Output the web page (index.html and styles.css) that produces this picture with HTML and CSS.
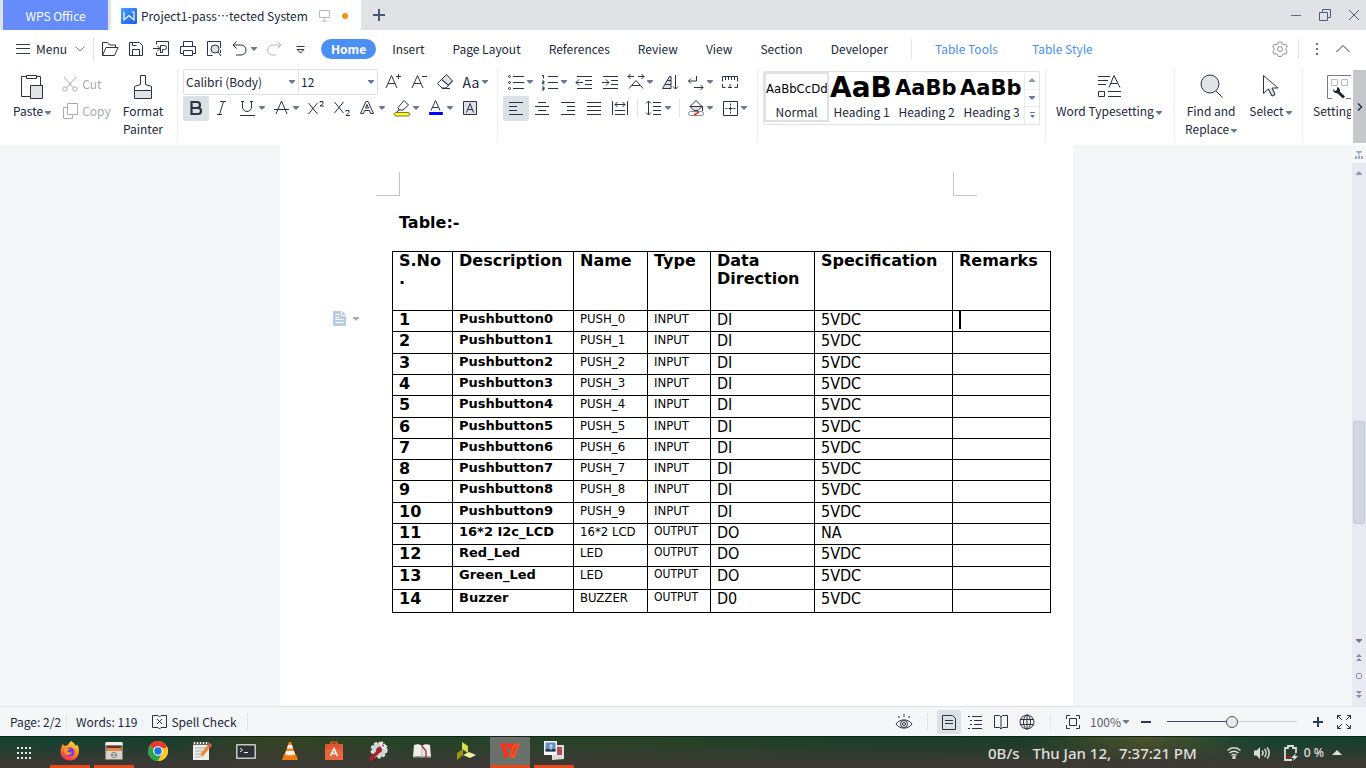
FILE: index.html
```html
<!DOCTYPE html>
<html lang="en">
<head>
<meta charset="utf-8">
<title>Project1 - WPS Office</title>
<link rel="stylesheet" href="styles.css">
</head>
<body>
<svg class="sprite" aria-hidden="true">
  <symbol id="caret" viewBox="0 0 6 4"><path d="M0 0h6v1L3 4 0 1z" fill="#6b7a99"/></symbol>
  <symbol id="caret-up" viewBox="0 0 6 4"><path d="M0 4h6V3L3 0 0 3z" fill="#8f9bb8"/></symbol>
</svg>
<div class="app">

<header class="titlebar">
  <button class="wps-tab">WPS Office</button>
  <div class="doc-tab">
    <svg width="16" height="16" viewBox="0 0 16 16"><defs><linearGradient id="wl" x2="1" y2="1"><stop stop-color="#4a9bff"/><stop offset="1" stop-color="#1660ea"/></linearGradient></defs><rect width="16" height="16" rx="1" fill="url(#wl)"/><path d="M3 4v8l5-4.500 5 4.500V4h-2.500" fill="none" stroke="#fff" stroke-width="1.200"/></svg>
    <span class="doc-name" lang="zh-CN">Project1-pass…tected System</span>
    <svg width="11" height="12" viewBox="0 0 11 12" fill="none" stroke="#b4bacb"><path d="M.5 .5h10v7H.5zM5.500 8v3M2.500 11h6"/></svg>
    <span class="unsaved"></span>
  </div>
  <button class="new-tab" aria-label="New tab"><svg width="12" height="12" viewBox="0 0 12 12"><path d="M6 0v12M0 6h12" stroke="#4c5774" stroke-width="2"/></svg></button>
  <div class="window-buttons">
    <button aria-label="Minimize"><svg width="12" height="12" viewBox="0 0 12 12" stroke="#5a6a8c"><path d="M1 6.500h10"/></svg></button>
    <button aria-label="Restore"><svg width="12" height="12" viewBox="0 0 12 12" fill="none" stroke="#4d5d80"><path d="M.5 3.500h8v8h-8zM3.500 3V.5h8v8H9"/></svg></button>
    <button aria-label="Close"><svg width="12" height="12" viewBox="0 0 12 12" stroke="#4d5d80"><path d="M1 1l10 10M11 1L1 11"/></svg></button>
  </div>
</header>

<nav class="menubar">
  <button class="menu-button">
    <svg width="14" height="12" viewBox="0 0 14 12" stroke="#333a4c"><path d="M0 1.500h14M0 5.500h14M0 10.500h14"/></svg>
    <span>Menu</span>
    <svg width="10" height="6" viewBox="0 0 10 6" fill="none" stroke="#8a8f9b"><path d="M.5 .5L5 5 9.500 .5"/></svg>
  </button>
  <span class="rule"></span>
  <div class="quick">
    <button aria-label="Open"><svg class="ic" viewBox="0 0 20 20"><path d="M2.500 16.500v-13h5l2 2.500h6v2M2.500 16.500l3.500-8h12l-3.500 8z"/></svg></button>
    <button aria-label="Save"><svg class="ic" viewBox="0 0 20 20"><path d="M3.500 3.500h10l3 3v10h-13zM6.500 16.500v-6h7v6M6.500 3.500v3h4"/></svg></button>
    <button aria-label="Export to PDF"><svg class="ic" viewBox="0 0 20 20"><path d="M4.500 5.500v-3h12v14h-12v-3M1 9.500h7M5.500 7L8 9.500 5.500 12M8.500 14V6.500h4a2 2 0 0 1 0 4h-2v3h-2"/></svg></button>
    <button aria-label="Print"><svg class="ic" viewBox="0 0 20 20"><path d="M5.500 7.500v-5h9v5M5.500 14.500h-3v-7h15v7h-3M5.500 11.500h9v5h-9z"/></svg></button>
    <button aria-label="Print preview"><svg class="ic" viewBox="0 0 20 20"><path d="M16.500 9V2.500h-13v14h5M16.500 14v-3"/><circle cx="11" cy="10" r="4" fill="#dfe1e6"/><path d="M14 13l3 4"/></svg></button>
    <button class="has-caret" aria-label="Undo"><svg class="ic" viewBox="0 0 20 20"><path d="M6.500 2.500L3 6l3.500 3.500M3 6h8a5 5 0 0 1 0 10H6"/></svg><svg class="caret"><use href="#caret"/></svg></button>
    <button aria-label="Redo"><svg class="ic off" viewBox="0 0 20 20"><path d="M13.500 2.500L17 6l-3.500 3.500M17 6H9a5 5 0 0 0-4 8.500 5 5 0 0 0 4 1.500h3"/></svg></button>
    <button aria-label="More quick access"><svg class="ic" viewBox="0 0 20 20"><path d="M6.500 7.500h8M7 10.500l3.500 3.500L14 10.500z"/></svg></button>
  </div>
  <div class="tabs">
    <button class="tab active">Home</button>
    <button class="tab">Insert</button>
    <button class="tab">Page Layout</button>
    <button class="tab">References</button>
    <button class="tab">Review</button>
    <button class="tab">View</button>
    <button class="tab">Section</button>
    <button class="tab">Developer</button>
    <span class="rule short"></span>
    <button class="tab context">Table Tools</button>
    <button class="tab context">Table Style</button>
  </div>
  <div class="menubar-end">
    <button aria-label="Settings"><svg class="ic grey" viewBox="0 0 20 20"><path d="M8.300 3h3.400l.6 2 1.500.8 2-.5 1.500 2.800-1.500 1.400v1.600l1.500 1.400-1.500 2.700-2-.5-1.500.8-.6 2H8.300l-.6-2-1.500-.8-2 .5-1.500-2.700 1.500-1.400V9.500L2.700 8.100l1.500-2.800 2 .5L7.700 5z"/><circle cx="10" cy="10" r="2.500"/></svg></button>
    <span class="rule short"></span>
    <button aria-label="More"><svg class="ic" viewBox="0 0 20 20"><path d="M9 4h2v2H9zM9 9h2v2H9zM9 14h2v2H9z" fill="#666c7c" stroke="none"/></svg></button>
    <button aria-label="Collapse ribbon"><svg class="ic" viewBox="0 0 20 20"><path d="M3.500 13L10 6.500l6.500 6.500"/></svg></button>
  </div>
</nav>

<section class="ribbon" aria-label="Home tools">
  <div class="group clipboard">
    <button class="big"><svg width="28" height="28" viewBox="0 0 28 28" fill="none" stroke="#2b3245"><path d="M9 4.500H3.500v20H12M18 4.500h4.500V13M8.500 3.500h10v3h-10z"/><path d="M12.500 13.500h12v13h-12z" fill="#e1e3e7"/></svg><span>Paste<svg class="caret"><use href="#caret"/></svg></span></button>
    <div class="stack">
      <button class="line off"><svg width="16" height="16" viewBox="0 0 16 16" fill="none" stroke="#a9abb0"><path d="M2 1l9 10.500M14 1L5 11.500"/><circle cx="3" cy="13" r="2.200"/><circle cx="13" cy="13" r="2.200"/></svg>Cut</button>
      <button class="line off"><svg width="16" height="16" viewBox="0 0 16 16" fill="none" stroke="#a9abb0"><path d="M5.500 .5h10v11h-10zM5 4.500H1.500v11h9V12"/></svg>Copy</button>
    </div>
    <button class="big"><svg width="28" height="28" viewBox="0 0 28 28" fill="none" stroke="#2b3245"><path d="M5.500 18.500h17v8h-17z" fill="#e1e3e7"/><path d="M5.500 18.500v-4l6-2v-9h5v9l6 2v4"/></svg><span>Format<br>Painter</span></button>
  </div>

  <div class="group font">
    <div class="row">
      <div class="combos">
        <label class="combo wide"><select aria-label="Font"><option>Calibri (Body)</option></select><svg class="caret"><use href="#caret"/></svg></label>
        <label class="combo"><select aria-label="Font size"><option>12</option></select><svg class="caret"><use href="#caret"/></svg></label>
      </div>
      <button aria-label="Grow font"><svg class="ic" viewBox="0 0 20 20"><path d="M3 16L8.500 3.500 14 16M5 11.500h7M13 4.500h5M15.500 2v5"/></svg></button>
      <button aria-label="Shrink font"><svg class="ic" viewBox="0 0 20 20"><path d="M3 16L8.500 3.500 14 16M5 11.500h7M13 4.500h5"/></svg></button>
      <button aria-label="Clear formatting"><svg class="ic" viewBox="0 0 20 20"><path d="M6.500 7.500l5-5 6 6.500-4 4z" fill="#dfe1e6"/><path d="M6.500 7.500l-4 4 4.500 4.500h4l6.500-7M6.500 7.500L13 13M7 16.500h8"/></svg></button>
      <button class="has-caret" aria-label="Change case"><span class="case">Aa</span><svg class="caret"><use href="#caret"/></svg></button>
    </div>
    <div class="row">
      <button class="on" aria-label="Bold"><svg class="ic" viewBox="0 0 20 20"><path d="M5.500 4h5.500a3 3 0 0 1 0 6H5.500zM5.500 10h6.500a3 3 0 0 1 0 6H5.500z" stroke-width="2.200"/></svg></button>
      <button aria-label="Italic"><svg class="ic" viewBox="0 0 20 20"><path d="M8 3.500h6M5 16.500h5M11.500 3.500l-4 13"/></svg></button>
      <button class="has-caret" aria-label="Underline"><svg class="ic" viewBox="0 0 20 20"><path d="M4.500 3v6a4.500 4.500 0 0 0 9 0V3M2 17.500h15M3 3.500h3M12 3.500h3"/></svg><svg class="caret"><use href="#caret"/></svg></button>
      <button class="has-caret" aria-label="Strikethrough"><svg class="ic" viewBox="0 0 20 20"><path d="M4 16L9.500 3 15 16M2 11.500h15"/></svg><svg class="caret"><use href="#caret"/></svg></button>
      <button aria-label="Superscript"><svg class="ic" viewBox="0 0 20 20"><path d="M2.500 5l9 11M11.500 5l-9 11M14 4.500V3.500h3v2l-3 2.500h4"/></svg></button>
      <button aria-label="Subscript"><svg class="ic" viewBox="0 0 20 20"><path d="M2.500 4l9 11M11.500 4l-9 11M14 13.500v-1h3v2L14 17.500h4"/></svg></button>
      <button class="has-caret" aria-label="Text effects"><svg class="ic" viewBox="0 0 20 20"><path d="M2.500 15.500L8 3.500h2l5.500 12h-3l-1-3h-5l-1 3zM7.500 10h3L9 6.500z"/></svg><svg class="caret"><use href="#caret"/></svg></button>
      <button class="has-caret" aria-label="Highlight"><svg class="ic" viewBox="0 0 20 20"><path d="M6 9.500l6-7 4.500 4.500-5.500 5H7zM7 12l-3 2.500h5"/><rect x="2.500" y="14.500" width="15" height="3.500" rx="1.500" fill="#ff0" stroke="#77765a"/></svg><svg class="caret"><use href="#caret"/></svg></button>
      <button class="has-caret" aria-label="Font color"><svg class="ic" viewBox="0 0 20 20"><path d="M5 12.500L9.500 2.500 14 12.500M6.500 9.500h6"/><rect x="3" y="14" width="14" height="3" rx="1" fill="#00f" stroke="none"/></svg><svg class="caret"><use href="#caret"/></svg></button>
      <button aria-label="Character shading"><svg class="ic" viewBox="0 0 20 20"><path d="M3.500 3.500h13v13h-13z" fill="#dfe1e6"/><path d="M6.500 14.500L10 5.500l3.500 9M7.500 11.500h5"/></svg></button>
    </div>
  </div>

  <div class="group para">
    <div class="row">
      <button class="has-caret" aria-label="Bullets"><svg class="ic" viewBox="0 0 20 20"><path d="M7 4.500h11M7 10.500h11M7 16.500h11"/><circle cx="3.500" cy="4.500" r="1"/><circle cx="3.500" cy="10.500" r="1"/><circle cx="3.500" cy="16.500" r="1"/></svg><svg class="caret"><use href="#caret"/></svg></button>
      <button class="has-caret" aria-label="Numbering"><svg class="ic" viewBox="0 0 20 20"><path d="M8 4.500h10M8 10.500h10M8 16.500h10M2 3.500h1.500v3M2 9h2v1.500H2.500V12H4.500M2 15h2v3H2M2.500 16.500H4"/></svg><svg class="caret"><use href="#caret"/></svg></button>
      <button aria-label="Decrease indent"><svg class="ic" viewBox="0 0 20 20"><path d="M3 4.500h15M11 8.500h7M11 12.500h7M3 16.500h15M2 10.500h7M5 7.500l-3 3 3 3"/></svg></button>
      <button aria-label="Increase indent"><svg class="ic" viewBox="0 0 20 20"><path d="M3 4.500h15M11 8.500h7M11 12.500h7M3 16.500h15M2 10.500h7M6 7.500l3 3-3 3"/></svg></button>
      <button class="has-caret" aria-label="Character scaling"><svg class="ic" viewBox="0 0 20 20"><path d="M2 4.500h6M4.500 2L2 4.500 4.500 7M12 4.500h6M15.500 2L18 4.500 15.500 7M3 16.500l7-8 7 8M6 13.500h8"/></svg><svg class="caret"><use href="#caret"/></svg></button>
      <button aria-label="Sort"><svg class="ic" viewBox="0 0 20 20"><path d="M2.500 16.500l7-12h1.500v12z" fill="#dfe1e6"/><path d="M5 12.500h6M7 8.500h4M15.500 3v14M13 14.500l2.500 2.500 2.500-2.500"/></svg></button>
      <button class="has-caret" aria-label="Paragraph marks"><svg class="ic" viewBox="0 0 20 20"><path d="M10.500 4v5h-8M5 6.500L2.500 9 5 11.500M8 15.500h9M14.500 13l2.500 2.500L14.500 18"/></svg><svg class="caret"><use href="#caret"/></svg></button>
      <button aria-label="Tabs"><svg class="ic" viewBox="0 0 20 20"><path d="M2.500 9.500v-5h15v5M5.500 5v3M8.500 5v3M11.500 5v3M14.500 5v3M2.500 12v3.500h3M8 15.500h4M10 12v3.500M14.500 15.500h3V12"/></svg></button>
    </div>
    <div class="row">
      <button class="on" aria-label="Align left"><svg class="ic" viewBox="0 0 20 20"><path d="M3 4.500h14M3 8.500h8M3 12.500h8M3 16.500h14"/></svg></button>
      <button aria-label="Center"><svg class="ic" viewBox="0 0 20 20"><path d="M6 4.500h8M3 8.500h14M6 12.500h8M3 16.500h14"/></svg></button>
      <button aria-label="Align right"><svg class="ic" viewBox="0 0 20 20"><path d="M3 4.500h14M9 8.500h8M9 12.500h8M3 16.500h14"/></svg></button>
      <button aria-label="Justify"><svg class="ic" viewBox="0 0 20 20"><path d="M3 4.500h14M3 8.500h14M3 12.500h14M3 16.500h14"/></svg></button>
      <button aria-label="Distribute"><svg class="ic" viewBox="0 0 20 20"><path d="M2.500 3v14M17.500 3v14M5 12.500h10M5 16.500h10M5 6.500h10M7.500 4L5 6.500 7.500 9M12.500 4L15 6.500 12.500 9"/></svg></button>
      <span class="rule mini"></span>
      <button class="has-caret" aria-label="Line spacing"><svg class="ic" viewBox="0 0 20 20"><path d="M4.500 3v14M2 5.500L4.500 3 7 5.500M2 14.500L4.500 17 7 14.500M9 4.500h8M9 8.500h8M9 12.500h8M9 16.500h8"/></svg><svg class="caret"><use href="#caret"/></svg></button>
      <span class="rule mini"></span>
      <button class="has-caret" aria-label="Shading"><svg class="ic" viewBox="0 0 20 20"><path d="M4 8.500h12l-5 4.500H8z" fill="#dfe1e6" stroke="none"/><path d="M4 8.500L10 2.500l6 6-4 4H8zM4 8.500h12M16.500 8v5"/><rect x="2.500" y="13.500" width="15" height="4" rx="2" fill="#fff" stroke="#888"/><path d="M8 17l5-3" stroke="#f03030" stroke-width="1.500"/></svg><svg class="caret"><use href="#caret"/></svg></button>
      <button class="has-caret" aria-label="Borders"><svg class="ic" viewBox="0 0 20 20"><path d="M3.500 3.500h14v14h-14z"/><path d="M10.500 5.500v10M5.500 10.500h10" stroke-dasharray="2 1 4 1 2"/></svg><svg class="caret"><use href="#caret"/></svg></button>
    </div>
  </div>

  <div class="group styles">
    <div class="gallery">
      <button class="style chosen"><span class="sample normal">AaBbCcDd</span><span>Normal</span></button>
      <button class="style"><span class="sample h1">AaB</span><span>Heading 1</span></button>
      <button class="style"><span class="sample h2">AaBb</span><span>Heading 2</span></button>
      <button class="style"><span class="sample h2">AaBb</span><span>Heading 3</span></button>
      <div class="gallery-nav">
        <button aria-label="Previous styles"><svg class="caret"><use href="#caret-up"/></svg></button>
        <button aria-label="Next styles"><svg class="caret"><use href="#caret"/></svg></button>
        <button aria-label="All styles"><svg width="5" height="7" viewBox="0 0 5 7"><path d="M0 0h5v1H0zM0 3h5L2.500 6z" fill="#6b7a99"/></svg></button>
      </div>
    </div>
  </div>

  <div class="group typeset">
    <button class="big"><svg width="28" height="28" viewBox="0 0 28 28" fill="none" stroke="#2b3245"><path d="M3 4.500h12M3 8.500h10M3 12.500h8M14 15.500L19 3.500 25 15.500M15.500 11.500h7M3.500 19.500h6v5h-6zM13 19.500h13M13 24.500h13"/></svg><span>Word Typesetting<svg class="caret"><use href="#caret"/></svg></span></button>
  </div>
  <div class="group editing">
    <button class="big"><svg width="28" height="28" viewBox="0 0 28 28" fill="none" stroke="#2b3245"><circle cx="13" cy="12" r="9" fill="#e1e3e7"/><path d="M19 19l6.500 6.500"/></svg><span>Find and<br>Replace<svg class="caret"><use href="#caret"/></svg></span></button>
    <button class="big"><svg width="28" height="28" viewBox="0 0 28 28" fill="none" stroke="#2b3245"><path d="M7.500 3.500v18l5-4.500 3.500 7 3-1.500-3-6.500h6z"/><path d="M12.500 17l3.500 7 3-1.500-3-6.500" fill="#e1e3e7"/></svg><span>Select<svg class="caret"><use href="#caret"/></svg></span></button>
  </div>
  <div class="group settings">
    <button class="big"><svg width="28" height="28" viewBox="0 0 28 28" fill="none" stroke="#777b85"><path d="M8 26.500H3.500v-23H27M22 26.500h5"/><path d="M7.500 7.500h6v6h-6zM17.500 7.500h6v6h-6z" stroke="#b8bac0"/><path d="M13 19l7 6.500" stroke="#1e2433" stroke-width="3"/><path d="M9 17c0 4 3 5 6 4 2-2 1-5-2-6v3l-2 1z" fill="#1e2433" stroke="none"/></svg><span>Settings</span></button>
  </div>
  <button class="ribbon-more" aria-label="Scroll ribbon"><svg width="6" height="8" viewBox="0 0 6 8" fill="none" stroke="#2b3245" stroke-width="1.500"><path d="M1 .5L4.500 4 1 7.500"/></svg></button>
</section>

<main class="workspace">
  <div class="canvas">
    <article class="page">
      <div class="marks"><i></i><i></i></div>
      <h1>Table:-</h1>
      <aside class="para-tool"><svg width="13" height="15" viewBox="0 0 13 15"><path d="M0 0h9l4 4v11H0z" fill="#b7cbe6"/><path d="M8.500 0v4.500H13M2.500 3.500h4M2.500 6.500h4M2.500 8.500h8M2.500 11.500h8" fill="none" stroke="#fff"/></svg><svg class="caret" viewBox="0 0 6 4"><path d="M0 0h6v1L3 4 0 1z" fill="#a9abb0"/></svg></aside>
      <table class="io">
        <colgroup><col class="c1"><col class="c2"><col class="c3"><col class="c4"><col class="c5"><col class="c6"><col class="c7"></colgroup>
        <thead><tr><th>S.No<br>.</th><th>Description</th><th>Name</th><th>Type</th><th>Data Direction</th><th>Specification</th><th>Remarks</th></tr></thead>
        <tbody>
          <tr><th>1</th><td>Pushbutton0</td><td>PUSH_0</td><td>INPUT</td><td>DI</td><td>5VDC</td><td><span class="cursor"></span></td></tr>
          <tr class="tall"><th>2</th><td>Pushbutton1</td><td>PUSH_1</td><td>INPUT</td><td>DI</td><td>5VDC</td><td></td></tr>
          <tr><th>3</th><td>Pushbutton2</td><td>PUSH_2</td><td>INPUT</td><td>DI</td><td>5VDC</td><td></td></tr>
          <tr><th>4</th><td>Pushbutton3</td><td>PUSH_3</td><td>INPUT</td><td>DI</td><td>5VDC</td><td></td></tr>
          <tr class="tall"><th>5</th><td>Pushbutton4</td><td>PUSH_4</td><td>INPUT</td><td>DI</td><td>5VDC</td><td></td></tr>
          <tr><th>6</th><td>Pushbutton5</td><td>PUSH_5</td><td>INPUT</td><td>DI</td><td>5VDC</td><td></td></tr>
          <tr><th>7</th><td>Pushbutton6</td><td>PUSH_6</td><td>INPUT</td><td>DI</td><td>5VDC</td><td></td></tr>
          <tr><th>8</th><td>Pushbutton7</td><td>PUSH_7</td><td>INPUT</td><td>DI</td><td>5VDC</td><td></td></tr>
          <tr class="tall"><th>9</th><td>Pushbutton8</td><td>PUSH_8</td><td>INPUT</td><td>DI</td><td>5VDC</td><td></td></tr>
          <tr><th>10</th><td>Pushbutton9</td><td>PUSH_9</td><td>INPUT</td><td>DI</td><td>5VDC</td><td></td></tr>
          <tr class="out"><th>11</th><td>16*2 I2c_LCD</td><td>16*2 LCD</td><td>OUTPUT</td><td>DO</td><td>NA</td><td></td></tr>
          <tr class="out tall"><th>12</th><td>Red_Led</td><td>LED</td><td>OUTPUT</td><td>DO</td><td>5VDC</td><td></td></tr>
          <tr class="out last"><th>13</th><td>Green_Led</td><td>LED</td><td>OUTPUT</td><td>DO</td><td>5VDC</td><td></td></tr>
          <tr class="out last"><th>14</th><td>Buzzer</td><td>BUZZER</td><td>OUTPUT</td><td>D0</td><td>5VDC</td><td></td></tr>
        </tbody>
      </table>
    </article>
  </div>
  <div class="scroll">
    <svg class="split" width="8" height="8" viewBox="0 0 8 8" fill="#9eabc9"><path d="M1 0h6v1L4 3 1 1zM3.500 2h1v3h-1zM0 5h2v3H0zM3 5h2v3H3zM6 5h2v3H6z"/></svg>
    <div class="track">
      <svg class="caret"><use href="#caret-up"/></svg>
      <div class="lane"><div class="thumb"></div></div>
      <svg class="caret"><use href="#caret"/></svg>
      <svg width="6" height="8" viewBox="0 0 6 8" fill="#7f8db0"><path d="M3 0l3 3H0zM3 4l3 3H0z"/></svg>
      <svg width="6" height="6" viewBox="0 0 6 6" fill="none" stroke="#7f8db0"><rect x=".5" y=".5" width="5" height="5" rx="1"/></svg>
      <svg width="6" height="8" viewBox="0 0 6 8" fill="#7f8db0"><path d="M3 4l3-3H0zM3 8l3-3H0z"/></svg>
    </div>
  </div>
</main>

<footer class="statusbar">
  <button class="page-count">Page: 2/2</button><span class="rule mini"></span>
  <button class="word-count">Words: 119</button><span class="rule mini faint"></span>
  <button class="spell"><svg width="15" height="14" viewBox="0 0 15 14" fill="none" stroke="#2b3245"><path d="M6 .5H.5v12H6M9 .5h5.500v12H9M6 .5l1.500 1.500L9 .5M6 12.500L7.500 14 9 12.500M5 4l5 5M10 4L5 9"/></svg>Spell Check</button><span class="rule mini"></span>
  <div class="status-end">
    <button aria-label="Eye protection"><svg class="ic" viewBox="0 0 20 20"><path d="M2 12c4-5.500 12-5.500 16 0-4 5.500-12 5.500-16 0zM10 5V2M5.500 6L4 4M14.500 6L16 4"/><circle cx="10" cy="12" r="3.500"/><circle cx="10" cy="12" r="1.500"/></svg></button>
    <span class="rule mini wide-gap"></span>
    <button class="on" aria-label="Page view"><svg class="ic" viewBox="0 0 20 20"><path d="M3.500 3.500h10l3 3v11h-13zM6 8.500h8M6 11.500h8"/></svg></button>
    <button aria-label="Outline"><svg class="ic" viewBox="0 0 20 20"><path d="M3 4.500h2M7 4.500h10M5 8.500h2M9 8.500h8M5 12.500h2M9 12.500h8M3 16.500h2M7 16.500h10"/></svg></button>
    <button aria-label="Reading view"><svg class="ic" viewBox="0 0 20 20"><path d="M3.500 3.500h5L10 5l1.500-1.500h5v12h-5L10 17l-1.500-1.500h-5zM10 5v12"/></svg></button>
    <button aria-label="Web view"><svg class="ic" viewBox="0 0 20 20"><circle cx="10" cy="10" r="7"/><ellipse cx="10" cy="10" rx="3.500" ry="7"/><path d="M3 7.500h14M3 12.500h14M10 3v14"/></svg></button>
    <span class="rule mini wide-gap"></span>
    <button aria-label="Fit"><svg class="ic" viewBox="0 0 20 20"><path d="M3.500 7V3.500H7M13 3.500h3.500V7M16.500 13v3.500H13M7 16.500H3.500V13M6.500 6.500h7v7h-7z"/></svg></button>
    <button class="zoom-value">100%<svg class="caret"><use href="#caret"/></svg></button>
    <button aria-label="Zoom out"><svg width="10" height="10" viewBox="0 0 10 10"><path d="M0 5h10" stroke="#2b3b55" stroke-width="2"/></svg></button>
    <input class="zoom" type="range" min="0" max="100" value="50" aria-label="Zoom">
    <button aria-label="Zoom in"><svg width="10" height="10" viewBox="0 0 10 10"><path d="M0 5h10M5 0v10" stroke="#2b3b55" stroke-width="2"/></svg></button>
    <button aria-label="Full screen"><svg class="ic" viewBox="0 0 20 20"><path d="M3.500 7V3.500H7M13 3.500h3.500V7M16.500 13v3.500H13M7 16.500H3.500V13M3.500 3.500L8 8M16.500 3.500L12 8M16.500 16.500L12 12M3.500 16.500L8 12"/></svg></button>
  </div>
</footer>
</div>

<div class="taskbar">
  <button class="launch" aria-label="Applications"><svg width="14" height="14" viewBox="0 0 14 14" fill="#e6e8e6"><path d="M0 1h2v2H0zM4 1h2v2H4zM8 1h2v2H8zM12 1h2v2h-2zM0 6h2v2H0zM4 6h2v2H4zM8 6h2v2H8zM12 6h2v2h-2zM0 11h2v2H0zM4 11h2v2H4zM8 11h2v2H8zM12 11h2v2h-2z"/></svg></button>
  <button class="app-icon running" aria-label="Firefox"><svg viewBox="0 0 20 20"><defs><linearGradient id="ff" x1=".8" x2=".3" y2="1"><stop stop-color="#ffe14a"/><stop offset=".5" stop-color="#ff8a1f"/><stop offset="1" stop-color="#f0285a"/></linearGradient></defs><path d="M11 0c3 2 4 3 4.500 5L17 3.500c4 5 2 16-7 16C1 19.500-1.500 11 2 5l.5-2L5 5c2-.5 3-1 3.500-2S10 1 11 0z" fill="url(#ff)"/><circle cx="10" cy="11" r="4.500" fill="#7a3be0"/><path d="M3 7c3-1 5 0 6.500 1.500L7 10c1 2 4 2 5 1-1 4-7 4-8-1z" fill="#ff9a22"/></svg></button>
  <button class="app-icon running" aria-label="Files"><svg viewBox="0 0 20 20"><rect x="1" y="1" width="18" height="18" rx="1" fill="#858079"/><path d="M2 1h16l1 3H1z" fill="#f1efe9"/><path d="M3 6h14v4H3z" fill="#e98746"/><path d="M3 5h14v2H3z" fill="#6a2d16"/><rect x="2" y="10" width="16" height="8" fill="#d5d2cc"/><circle cx="10" cy="14" r="2.500" fill="#f4f4f2" stroke="#77736d"/><path d="M8 14h4" stroke="#555"/></svg></button>
  <button class="app-icon" aria-label="Chrome"><svg viewBox="0 0 20 20"><circle cx="10" cy="10" r="10" fill="#ffca28"/><path d="M10 10L1.300 5A10 10 0 0 1 18.700 5z" fill="#e53a30"/><path d="M1.300 5A10 10 0 0 0 10 20l4-8-4-1z" fill="#2ba24c"/><path d="M10 5h8.700l.6 2H10z" fill="#e53a30"/><path d="M18.700 5A10 10 0 0 1 10 20l4.500-8z" fill="#ffca28"/><circle cx="10" cy="10" r="4.800" fill="#fff"/><circle cx="10" cy="10" r="3.700" fill="#1a73e8"/></svg></button>
  <button class="app-icon" aria-label="Text editor"><svg viewBox="0 0 20 20"><path d="M1 2h16v17H1z" fill="#eeeeea"/><path d="M1 1h16v3H1z" fill="#6c6b67"/><path d="M2 2h1M5 2h1M8 2h1M11 2h1M14 2h1" stroke="#fff" stroke-width="2"/><path d="M3 7h11M3 10h8M3 13h6M3 16h5" stroke="#aaa"/><path d="M17 5L9 15" stroke="#ed8733" stroke-width="3.500"/><path d="M19 3l-2 2.500" stroke="#d65560" stroke-width="3.500"/><path d="M8 13l3 2-4 2z" fill="#f2ce9c"/></svg></button>
  <button class="app-icon" aria-label="Terminal"><svg viewBox="0 0 20 20"><rect y="3" width="20" height="15" rx="1" fill="#c9c9c9"/><rect x="1.500" y="4.500" width="17" height="12" fill="#2e3234"/><path d="M4 7l2.500 2L4 11M8 11.500h4" fill="none" stroke="#eee"/></svg></button>
  <button class="app-icon" aria-label="VLC"><svg viewBox="0 0 20 20"><path d="M4 13h12l2 6H2z" fill="#ee7a0c"/><path d="M9 1h2l4.500 13c-2 2-9 2-11 0z" fill="#f28a1d"/><path d="M8 4h4l1 3.500H7zM6 10h8l1 3c-2 1.500-8 1.500-10 0z" fill="#f2f2f0"/></svg></button>
  <button class="app-icon" aria-label="Software"><svg viewBox="0 0 20 20"><path d="M7 4V1.500h6V4" fill="none" stroke="#d2542a" stroke-width="2"/><path d="M1 3h18v16H1z" fill="#e9663a"/><path d="M1 3h18v5H1z" fill="#dd5730"/><path d="M6.500 15L10 7.500l3.500 7.500M7.500 12.500h5" fill="none" stroke="#fff" stroke-width="1.500"/></svg></button>
  <button class="app-icon" aria-label="Tools"><svg viewBox="0 0 20 20"><circle cx="11" cy="9" r="5" fill="none" stroke="#d2d2d0" stroke-width="4.500"/><circle cx="11" cy="9" r="7.500" fill="none" stroke="#e4e4e2" stroke-width="2" stroke-dasharray="3 2"/><path d="M14 5l-4 6-7 7" fill="none" stroke="#b51f2b" stroke-width="3.500" stroke-linecap="round"/><path d="M15 1c-3 2-2 6 1 6l3-2" fill="none" stroke="#f3f3f1" stroke-width="2"/></svg></button>
  <button class="app-icon" aria-label="Dictionary"><svg viewBox="0 0 20 20"><path d="M2 4c3-1 6-1 8 1 2-2 5-2 8-1l1 12c-4-1-7-1-9 0-2-1-5-1-9 0z" fill="#efefea"/><path d="M10 5v11M1 16h18" stroke="#aaa"/><path d="M10 5l4 5v7" fill="none" stroke="#b4333c" stroke-width="1.500"/></svg></button>
  <button class="app-icon" aria-label="Launcher"><svg viewBox="0 0 20 20"><path d="M6 1l6 4v7l-6-4z" fill="#d8dc50"/><path d="M1 12l6-4v6l-6 5z" fill="#99960c"/><path d="M7 14l6-3 7 3-6 3z" fill="#eff0a0"/></svg></button>
  <button class="app-icon running current" aria-label="WPS Writer"><svg viewBox="0 0 20 20"><path d="M0 2.500h13.500L10.500 10 8.500 5.500H5.500l3 7L7 17H5z" fill="#ff2f1c"/><path d="M12 6.500L9 15l2.500 2h3L20 2.500h-5.500z" fill="#ff4a22"/><path d="M15.500 5.500l-3 8" stroke="#8c4a3c"/></svg></button>
  <button class="app-icon running" aria-label="Screenshots"><svg viewBox="0 0 20 20"><path d="M8 4h12v14l-12 1z" fill="#deddd8"/><path d="M12 6h6v8h-6z" fill="#b34c56"/><path d="M0 0h13v14H0z" fill="#f7f7f5"/><path d="M1.500 1.500h10v9h-10z" fill="#5f8fc4"/><path d="M1.500 8h10v2.500h-10z" fill="#26384e"/><path d="M7 3v6M5 5h4" stroke="#dbe7f3"/></svg></button>
  <div class="tray">
    <span>0B/s</span><span>Thu Jan 12,&nbsp; 7:37:21 PM</span>
    <svg class="wifi" width="14" height="13" viewBox="0 0 14 13" fill="none" stroke="#dcdcd8" stroke-width="1.500"><path d="M.5 4.500a9 9 0 0 1 13 0M2.500 7a6.500 6.500 0 0 1 9 0M4.500 9.500a4 4 0 0 1 5 0"/><circle cx="7" cy="11.500" r="1" fill="#dcdcd8"/></svg>
    <svg class="vol" width="16" height="14" viewBox="0 0 16 14" fill="none" stroke="#dcdcd8" stroke-width="1.500"><path d="M0 4.500h2.500L6 1v12L2.500 9.500H0z" fill="#dcdcd8" stroke="none"/><path d="M8 4.500a4 4 0 0 1 0 5M10.500 3a6 6 0 0 1 0 8M13 1.500a8 8 0 0 1 0 11"/></svg>
    <svg width="15" height="16" viewBox="0 0 15 16"><path d="M8 15H1V3h3V1h5v2h3v5" fill="none" stroke="#dcdcd8" stroke-width="1.800"/><path d="M3 11h3v2H3z" fill="#d01010"/><path d="M12 8l-5 5h3l-1 3 5-5h-3z" fill="#dcdcd8"/></svg>
    <span class="battery">0 %</span>
    <svg width="10" height="6" viewBox="0 0 10 6"><path d="M5 0l5 5H0z" fill="#dcdcd8"/></svg>
  </div>
</div>
</body>
</html>
```
FILE: styles.css
```css
* { box-sizing: border-box; }
body {
  margin: 0;
  min-height: 100vh;
  display: flex;
  flex-direction: column;
  overflow: hidden;
  background: #fff;
  color: #20283a;
  font: 12px/18px "Noto Sans CJK SC", "Noto Sans", sans-serif;
}
button, select, input { font: inherit; color: inherit; }
button {
  display: flex;
  align-items: center;
  justify-content: center;
  flex: none;
  padding: 0;
  border: 0;
  background: none;
  white-space: nowrap;
}
svg { flex: none; }
.sprite { position: absolute; width: 0; height: 0; }
.ic { width: 20px; height: 20px; fill: none; stroke: #2b3245; }
.ic.off { stroke: #b4b7bf; }
.ic.grey { stroke: #8b8f99; }
.caret { width: 6px; height: 4px; }
.rule { flex: none; width: 1px; height: 24px; background: #e3e4e8; }
.rule.short { height: 20px; }
.rule.mini { height: 18px; margin: 0 3px 0 4px; }
.rule.faint { background: #eceef1; }
.app { flex: 1; min-height: 0; display: flex; flex-direction: column; }

/* Title bar */
.titlebar { flex: none; display: flex; height: 30px; padding-left: 3px; background: #e1e2e6; }
.wps-tab { width: 105px; padding-top: 2px; background: #658cfa; color: #fff; }
.doc-tab { display: flex; align-items: center; width: 250px; margin-left: 3px; padding: 2px 0 0 10px; background: #fff; }
.doc-name { margin: 0 11px 0 4px; white-space: nowrap; }
.unsaved { width: 6px; height: 6px; margin-left: 12px; border-radius: 50%; background: #e8960f; }
.new-tab { width: 36px; }
.window-buttons { display: flex; margin-left: auto; gap: 4px; }
.window-buttons button { width: 25px; }

/* Menu bar */
.menubar { flex: none; display: flex; align-items: center; height: 38px; }
.menu-button { gap: 6px; padding: 0 8px 0 16px; }
.menu-button svg:last-child { margin-left: 2px; }
.quick { display: flex; margin-left: 3px; }
.quick button, .row button { width: 26px; height: 25px; border-radius: 2px; }
.quick .has-caret, .row .has-caret { width: 34px; justify-content: flex-start; padding-left: 3px; }
.has-caret .caret { margin-left: 1px; }
.tabs { display: flex; align-items: center; margin-left: 8px; }
.tab { height: 20px; padding: 0 14px; }
.tab.active { margin-right: 2px; padding: 0 10px; border-radius: 10px; background: #4a8ff2; color: #fff; font-weight: 700; }
.tab.context { color: #4a8ff2; padding: 0 17px; }
.tabs .rule { margin: 0 6px 0 9px; }
.menubar-end { display: flex; align-items: center; margin-left: auto; padding-right: 10px; }
.menubar-end button { width: 26px; }
.menubar-end .rule { margin: 0 5px; }

/* Ribbon */
.ribbon { flex: none; display: flex; height: 77px; padding: 1px 0 2px; overflow: hidden; position: relative; }
.group { flex: none; border-right: 1px solid #edeef1; }
.big { flex-direction: column; justify-content: flex-start; padding-top: 3px; gap: 2px; line-height: 18px; }
.big .caret, .zoom-value .caret { margin-left: 2px; vertical-align: middle; }
.clipboard { display: flex; width: 178px; padding-left: 13px; }
.stack { display: flex; flex-direction: column; gap: 9px; margin: 6px 12px 0 11px; }
.line { justify-content: flex-start; gap: 4px; }
.off { color: #a9abb0; }
.row { display: flex; align-items: center; height: 26px; }
.row .on, .status-end .on { background: #dce1e5; }
.font { width: 320px; padding-left: 5px; }
.combos { display: flex; width: 195px; margin-right: 2px; border: 1px solid #dfe1e5; border-radius: 2px; background: #fff; }
.combo { display: flex; align-items: center; flex: 1; height: 24px; }
.combo.wide { flex: none; width: 115px; border-right: 1px solid #dfe1e5; }
.combo select { appearance: none; width: 100%; height: 24px; padding: 0 2px; border: 0; background: none; }
.combo .caret { margin-left: -9px; margin-right: 3px; pointer-events: none; }
.case { width: 20px; font-size: 14px; }
.para { width: 260px; padding-left: 5px; }
.styles { width: 288px; padding: 2px 5px 0; }
.gallery { display: flex; height: 54px; border: 1px solid #dfe1e5; border-radius: 2px; }
.style { flex-direction: column; width: 65px; height: 50px; padding-bottom: 1px; overflow: hidden; justify-content: flex-end; }
.style.chosen { outline: 2px solid #dfe1e5; outline-offset: -2px; }
.sample { display: flex; align-items: center; width: 65px; height: 30px; padding-left: 1px; color: #000; font-family: "DejaVu Sans", sans-serif; font-weight: 700; }
.sample.normal { width: 61px; padding: 0; overflow: hidden; font: 13px "DejaVu Sans Condensed", "DejaVu Sans", sans-serif; }
.sample.h1 { font-size: 28px; }
.sample.h2 { font-size: 21px; }
.gallery-nav { flex: 1; display: flex; flex-direction: column; border-left: 1px solid #e9eaee; }
.gallery-nav button { flex: 1; width: 100%; }
.gallery-nav button + button { border-top: 1px solid #e9eaee; }
.typeset { width: 129px; padding-left: 10px; }
.editing { display: flex; gap: 12px; width: 128px; padding-left: 10px; }
.editing .big, .typeset .big { text-align: center; }
.settings { padding-left: 10px; border: 0; }
.settings .big { align-items: flex-start; }
.settings svg { margin-left: 11px; }
.ribbon-more { position: absolute; right: 0; top: 2px; bottom: 2px; width: 13px; background: #c7c8cc; }
.ribbon::after { content: ""; position: absolute; right: 13px; top: 0; bottom: 0; width: 2px; background: #fff; }

/* Document */
.workspace { flex: 1; min-height: 0; display: flex; background: #f5f6f8; }
.canvas { flex: 1; padding-left: 1px; overflow: hidden; }
.page { position: relative; width: 793px; min-height: 100%; margin: 0 auto; padding: 27px 22px 0 112px; background: #fff; color: #000; font-family: "DejaVu Sans", sans-serif; }
.marks { display: flex; justify-content: space-between; margin: 0 74px 0 -16px; }
.marks i { width: 24px; height: 24px; border: solid #c6c6c6; border-width: 0 1px 1px 0; }
.marks i:last-child { border-width: 0 0 1px 1px; }
.page h1 { margin: 17px 0 19px 7px; font-size: 16px; line-height: 19px; }
.para-tool { position: absolute; left: 53px; top: 166px; display: flex; align-items: center; gap: 7px; }
.io { width: 659px; table-layout: fixed; border-collapse: collapse; font-size: 16px; line-height: 18px; }
.io th, .io td { padding: 0 0 0 6px; border: 1px solid #000; text-align: left; vertical-align: top; }
.io tbody { line-height: 17px; }
.io td { font-family: "DejaVu Sans Condensed", "DejaVu Sans", sans-serif; }
.c1 { width: 60px; }
.c2 { width: 121px; }
.c3 { width: 74px; }
.c4 { width: 63px; }
.c5 { width: 104px; }
.c6 { width: 138px; }
.io thead tr { height: 59px; }
.io tbody tr { height: 21px; }
.io tbody .tall { height: 22px; }
.io tbody .last { height: 23px; }
.io td:nth-child(2) { font: 700 13px/16px "DejaVu Sans", sans-serif; }
.io td:nth-child(3), .io td:nth-child(4) { font-size: 13px; line-height: 16px; }
.io .out td:nth-child(4) { font-size: 12px; line-height: 14px; }
.cursor { display: block; width: 2px; height: 18px; background: #000; }

.scroll { flex: none; display: flex; flex-direction: column; align-items: center; width: 14px; padding-top: 6px; }
.track { flex: 1; display: flex; flex-direction: column; align-items: center; width: 100%; margin-top: 4px; padding: 8px 0 8px; background: #e9eaf1; gap: 11px; }
.lane { flex: 1; width: 12px; display: flex; flex-direction: column; justify-content: flex-end; padding-bottom: 104px; }
.thumb { height: 103px; border: 1px solid #c5cad6; border-radius: 2px; background: #d3d7e1; }

/* Status bar */
.statusbar { flex: none; display: flex; align-items: center; height: 30px; border-top: 1px solid #e0e2e7; background: #f5f6f8; }
.page-count { padding: 0 1px 0 10px; }
.word-count { padding: 0 1px 0 6px; }
.spell { gap: 4px; padding: 0 6px; }
.status-end { display: flex; align-items: center; margin-left: auto; padding-right: 9px; }
.status-end button { width: 26px; height: 24px; }
.status-end .on { width: 24px; margin-right: 1px; border-radius: 2px; }
.rule.wide-gap { margin: 0 9px 0 10px; }
.status-end .zoom-value { width: 47px; color: #565d6e; }
.zoom { appearance: none; width: 130px; height: 14px; margin: 0 8px; background: linear-gradient(90deg, #3c4961 50%, #c9ccd3 50%) center / 100% 1px no-repeat; }
.zoom::-webkit-slider-thumb { appearance: none; width: 12px; height: 12px; border: 1px solid #555; border-radius: 50%; background: #e9eaec; }

/* Desktop taskbar */
.taskbar {
  flex: none;
  display: flex;
  height: 32px;
  border-top: 1px solid #14201c;
  background:
    linear-gradient(180deg, transparent, #3c3935 85%),
    linear-gradient(90deg, #0f4431, #123e2b 12%, #34451f 20%, #1f4526 30%, #264424 45%, #194127 60%, #153d28 75%, #4b5528 84%, #104431 92%, #0f3f2d);
}
.launch { width: 48px; }
.app-icon { width: 40px; margin: 0 2px; border-bottom: 3px solid transparent; }
.app-icon svg { width: 20px; height: 20px; }
.app-icon.running { border-color: #e4491b; }
.app-icon.current { background: #68716a; }
.tray { display: flex; align-items: center; margin-left: auto; padding-right: 24px; color: #e0e0dc; font: 500 15px "Noto Sans", sans-serif; white-space: nowrap; }
.tray span + span { margin-left: 13px; }
.tray .wifi { margin: 0 13px 0 30px; }
.tray .vol { margin-right: 14px; }
.tray .battery { margin: 0 8px 0 5px; font-size: 12px; }
```
